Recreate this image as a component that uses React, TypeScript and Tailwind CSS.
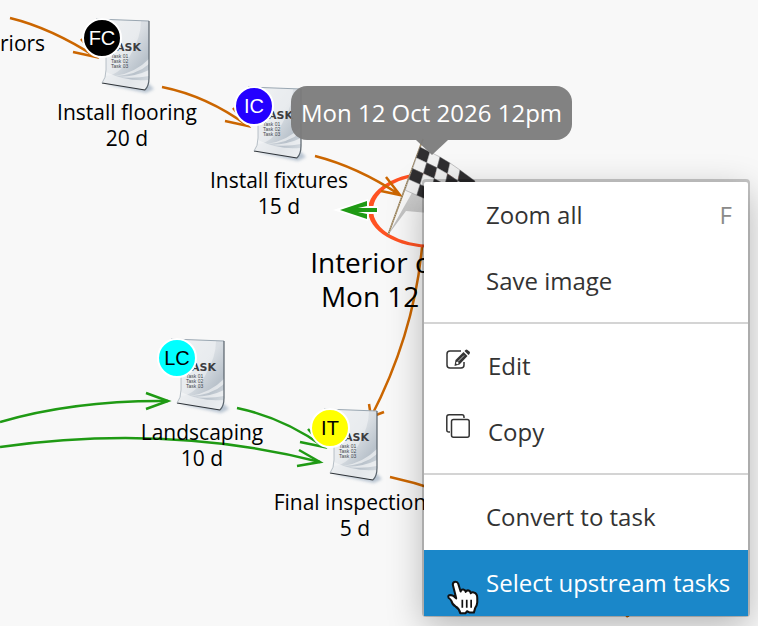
import React from 'react';
import { clsx } from 'clsx';

interface TaskNodeProps {
  name: string;
  duration: string;
  initials: string;
  position: string;
  badge: string;
}

interface MenuItemProps {
  label: string;
  shortcut?: string;
  icon?: React.ReactNode;
  active?: boolean;
  children?: React.ReactNode;
}

const ORANGE = '#cb6600';
const GREEN = '#1f9a14';

// path of each dependency plus the strokes of its arrow head
const edges = [
  { color: ORANGE, line: 'M10 18 Q51 28 96 57', head: 'M73 52 L96 57 L81 39' },
  { color: ORANGE, line: 'M162 87 Q207 96 248 126', head: 'M225 121 L248 126 L233 108' },
  { color: ORANGE, line: 'M422 247 Q414 334 371 417', head: 'M369 404 L371 417 L384 412' },
  { color: ORANGE, line: 'M390 477 Q520 505 628 617', head: 'M626 601 L628 617' },
  { color: GREEN, line: 'M0 422 Q75 400 168 401', head: 'M146 393 L168 401 L146 409' },
  { color: GREEN, line: 'M0 447 C100 433 210 434 320 462', head: 'M299 450 L320 462 L297 466' },
  { color: GREEN, line: 'M237 408 Q284 418 324 447', head: 'M300 442 L324 447 L308 429' },
];

// corner points of the flag cloth along its top edge
const clothTop = [[420, 147], [430, 152], [440, 157], [450, 163], [460, 170], [475, 181]];
const cell = (col: number, row: number) => {
  const at = (c: number, r: number) => `${clothTop[c][0] - r * 3.7 + r * c * 0.4},${clothTop[c][1] + r * 10.8}`;
  return [at(col, row), at(col + 1, row), at(col + 1, row + 1), at(col, row + 1)].join(' ');
};

const TaskDocument = () => (
  <svg viewBox="0 0 80 80" className="size-20" aria-hidden="true">
    <defs>
      <linearGradient id="paper" x1="0" y1="0" x2="1" y2="1">
        <stop offset="0" stopColor="#e6eaed" />
        <stop offset="0.5" stopColor="#d9dee3" />
        <stop offset="0.75" stopColor="#b9c2cb" />
        <stop offset="1" stopColor="#dfe4e8" />
      </linearGradient>
      <filter id="soft" x="-20%" y="-50%" width="140%" height="200%">
        <feGaussianBlur stdDeviation="1.4" />
      </filter>
    </defs>
    <path d="M18 68 L59 77 L67 73 L60 66 Z" fill="#8fa3b8" opacity="0.6" filter="url(#soft)" />
    <path d="M9 3 L62 5 L62 62 Q62 70 58 74 L15 67 Q19 62 19 54 L19 10 Q17 4 9 3 Z" fill="url(#paper)" />
    <path d="M19 10 L19 60 Q34 59 44 38 Q54 21 54 5 L14 3 Z" fill="#ffffff" opacity="0.4" />
    <path d="M28 60 Q48 57 62 43 L62 48 Q50 59 28 60 Z" fill="#fff" opacity="0.55" />
    <path d="M32 61 Q50 60 62 54 L62 60 Q48 63 32 61 Z" fill="#fff" opacity="0.6" />
    <path d="M19 56 Q19 62 15 67 L58 74 Q61 70 61 64 Q40 66 19 56 Z" fill="#f3f5f6" opacity="0.7" />
    <path d="M9 3 L62 5" stroke="#9aa7b2" strokeWidth="1" />
    <path d="M62 5 L62 62 Q62 70 58 74" fill="none" stroke="#59636c" strokeWidth="1.2" />
    <path d="M15 67 L58 74" stroke="#2e3338" strokeWidth="1.2" />
    <path d="M19 22 L19 54 Q19 62 15 67" fill="none" stroke="#a8b2bb" strokeWidth="0.8" />
    <text x="54" y="35" textAnchor="end" fill="#3c3c40" fontSize="11" fontWeight="700" fontFamily="DejaVu Sans, sans-serif">
      TASK
    </text>
    <g fill="#44474b" fontSize="5" fontFamily="Liberation Sans, sans-serif">
      <text x="24" y="42">Task 01</text>
      <text x="24" y="47">Task 02</text>
      <text x="24" y="52">Task 03</text>
    </g>
  </svg>
);

const TaskNode = ({ name, duration, initials, position, badge }: TaskNodeProps) => (
  <figure className={clsx('absolute flex w-[200px] flex-col items-center', position)}>
    <div className="relative">
      <TaskDocument />
      <span
        className={clsx(
          'absolute top-[2px] -left-[5px] flex size-10 items-center justify-center rounded-full border-2 border-white',
          "font-['Liberation_Sans',sans-serif] text-[20px] leading-none",
          badge
        )}
      >
        {initials}
      </span>
    </div>
    <figcaption className="mt-[3px] text-center text-[21px] leading-[26px] whitespace-nowrap">
      {name}
      <br />
      {duration}
    </figcaption>
  </figure>
);

const Diagram = () => (
  <svg width="758" height="626" viewBox="0 0 758 626" className="absolute top-0 left-0" aria-hidden="true">
    {edges.map((edge) => (
      <g key={edge.line} fill="none" stroke={edge.color} strokeWidth="2.5">
        <path d={edge.line} />
        <path d={edge.head} strokeMiterlimit="8" />
      </g>
    ))}
  </svg>
);

const Milestone = () => (
  <svg width="758" height="626" viewBox="0 0 758 626" className="absolute top-0 left-0" aria-hidden="true">
    <defs>
      <linearGradient id="flagShadow" x1="1" y1="0" x2="0" y2="1">
        <stop offset="0" stopColor="#d2d2d2" />
        <stop offset="1" stopColor="#a8a8a8" />
      </linearGradient>
    </defs>
    <path
      fillRule="evenodd"
      fill="#ff5222"
      d="M368 210 a64 38 0 1 0 128 0 a64 38 0 1 0 -128 0 Z M373 210 a59 35 0 1 1 118 0 a59 35 0 1 1 -118 0 Z"
    />
    <path d="M315 156 Q358 167 400 195 M381 191 L400 195 L386 177" fill="none" stroke={ORANGE} strokeWidth="2.5" />
    <path d="M333 210 L368 199 L369 206 L378 206 L378 214 L369 214 L368 221 Z" fill="#fff" />
    <path d="M340 210 L367 201 L367 206 L358 208 L377 208 L377 212 L358 212 L367 214 L367 219 Z" fill={GREEN} />
    <path d="M388 235 L413 191 L448 200 L440 214 L406 211 Z" fill="url(#flagShadow)" opacity="0.8" />
    <path d="M423 139 L388 235" stroke="#8b7450" strokeWidth="1.6" />
    <path d="M423 139 L388 235" stroke="#e8d9b4" strokeWidth="0.8" strokeDasharray="1 1" />
    <g stroke="#77777a" strokeWidth="0.4">
      {[0, 1, 2, 3].map((row) =>
        [0, 1, 2, 3, 4].map((col) => (
          <polygon key={`${row}-${col}`} points={cell(col, row)} fill={(row + col) % 2 ? '#f1f1f1' : '#2f2e30'} />
        ))
      )}
    </g>
  </svg>
);

const EditIcon = () => (
  <svg viewBox="0 0 24 24" className="size-6" fill="none" stroke="#333" aria-hidden="true">
    <path d="M15 3 H4 Q1 3 1 6 V17 Q1 20 4 20 H15 Q18 20 18 17 V14" strokeWidth="1.5" />
    <path d="M8.5 18 L9.5 12 L17.5 4 L21.5 8 L13.5 16.5 Z" fill="#333" stroke="none" />
    <path d="M18.5 3 L19.5 2 Q20.5 1 21.5 2 L24 4 Q24 5 23.5 6 L22.5 7 Z" fill="#333" stroke="none" />
    <path d="M12 13.5 L18 7.5" stroke="#fff" strokeWidth="0.7" />
    <circle cx="11.3" cy="15" r="1.2" fill="#fff" stroke="none" />
  </svg>
);

const CopyIcon = () => (
  <svg viewBox="0 0 24 24" className="size-6" fill="none" stroke="#333" strokeWidth="1.5" aria-hidden="true">
    <rect x="5.5" y="5.5" width="17.7" height="17.7" rx="2" />
    <path d="M4 18 H3 Q0.8 18 0.8 16 V3 Q0.8 0.8 3 0.8 H16 Q18 0.8 18 3 V4" />
  </svg>
);

const HandCursor = () => (
  <svg viewBox="-4 -2 100 106" className="absolute top-[30px] left-[22px] h-[36px] w-[34px]" aria-hidden="true">
    <path
      d="M16 12 Q16 3 24 3 Q30 3 32 9 L39 32 Q40 25 47 26 Q53 27 54 33 Q57 27 63 29 Q68 31 69 37 Q72 33 78 35 Q88 38 88 50 L88 64 Q87 74 82 80 L78 94 H66 L58 90 L53 96 H38 Q35 82 24 76 Q14 70 12 60 Q9 54 4 51 Q0 43 8 42 Q18 42 26 52 Z"
      fill="#fff"
      stroke="#111"
      strokeWidth="6"
      strokeLinejoin="round"
    />
    <path d="M44 56 V80 M57 56 V80 M70 56 V80" stroke="#111" strokeWidth="5" />
  </svg>
);

const MenuItem = ({ label, shortcut, icon, active, children }: MenuItemProps) => (
  <button
    type="button"
    role="menuitem"
    className={clsx(
      'relative flex h-[66px] w-full items-center pr-4 pl-[22px] text-left text-[24px] whitespace-nowrap',
      active ? 'bg-[#1a87c9] font-medium text-white' : 'text-[#333]'
    )}
  >
    <span className={clsx('shrink-0 pb-3', icon ? 'w-[42px]' : 'w-10')}>{icon}</span>
    <span className="flex-1">{label}</span>
    {shortcut && <kbd className="font-[inherit] text-[#8a8a8a]">{shortcut}</kbd>}
    {children}
  </button>
);

const Separator = () => <hr className="mt-2 mb-[9px] h-[2px] border-0 bg-[#d4d4d4]" />;

export default function App() {
  return (
    <main className="relative h-screen min-h-[626px] w-full overflow-hidden bg-[#f8f8f8] font-['Open_Sans',sans-serif] text-black">
      <Diagram />

      <p className="pt-[30px] text-[21px] leading-[26px]">riors</p>
      <TaskNode name="Install flooring" duration="20 d" initials="FC" position="top-[16px] left-[27px]" badge="bg-black text-white" />
      <TaskNode name="Install fixtures" duration="15 d" initials="IC" position="top-[84px] left-[179px]" badge="bg-[#2400ff] text-white" />
      <TaskNode name="Landscaping" duration="10 d" initials="LC" position="top-[336px] left-[102px]" badge="bg-[#00ffff] text-black" />
      <TaskNode name="Final inspections" duration="5 d" initials="IT" position="top-[406px] left-[255px]" badge="bg-[#ffff00] text-black" />

      <Milestone />
      <p className="absolute top-[245px] left-[282px] w-[300px] text-center text-[28px] leading-[34px] whitespace-nowrap">
        Interior completed
        <br />
        Mon 12 Oct 2026
      </p>

      <div
        role="tooltip"
        className="absolute top-[86px] left-[291px] flex h-[54px] w-[281px] items-center justify-center rounded-2xl bg-[#7b7b7b]/95 text-[24px] font-medium whitespace-nowrap text-white"
      >
        Mon 12 Oct 2026 12pm
        <svg viewBox="0 0 32 15" className="absolute top-full left-[125px] h-[15px] w-[32px]" aria-hidden="true">
          <path d="M0 0 H32 L16 15 Z" fill="#7b7b7b" fillOpacity="0.95" />
        </svg>
      </div>

      <div
        role="menu"
        className="absolute top-[182px] left-[424px] w-[324px] rounded-xs bg-white shadow-[0_-1px_0_2px_rgba(0,0,0,0.2),0_10px_36px_rgba(0,0,0,0.28)]"
      >
        <MenuItem label="Zoom all" shortcut="F" />
        <MenuItem label="Save image" />
        <Separator />
        <MenuItem label="Edit" icon={<EditIcon />} />
        <MenuItem label="Copy" icon={<CopyIcon />} />
        <Separator />
        <MenuItem label="Convert to task" />
        <MenuItem label="Select upstream tasks" active>
          <HandCursor />
        </MenuItem>
      </div>
    </main>
  );
}
